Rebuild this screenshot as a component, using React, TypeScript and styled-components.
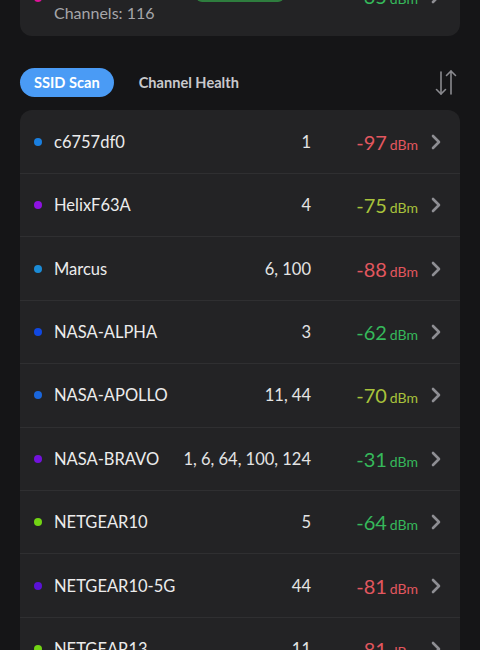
import * as React from "react"
import styled, { createGlobalStyle } from "styled-components"

const GlobalStyle = createGlobalStyle`
  html, body {
    margin: 0;
    background: #151517;
    font-family: Lato, "Noto Sans", sans-serif;
    color: #ececec;
  }
`

const Page = styled.div`
  padding: 0 20px 40px;
`

const Card = styled.div`
  background: #232325;
  border-radius: 12px;
`

const CurrentCard = styled(Card)`
  margin-top: -32px;
  padding: 12px 18px 12px 14px;
  display: flex;
  align-items: center;
`

const InfoColumn = styled.div`
  display: flex;
  flex-direction: column;
  flex: 1;
`

const CurrentName = styled.div`
  font-size: 16.5px;
  line-height: 22px;
`

const SubLine = styled.div`
  font-size: 16px;
  line-height: 22px;
  color: #a6a6aa;
`

const Badge = styled.div`
  width: 88px;
  height: 22px;
  border-radius: 6px;
  background: #2e7d3e;
  margin-right: 72px;
  margin-top: -23px;
`

const Tabs = styled.div`
  display: flex;
  align-items: center;
  gap: 11px;
  margin: 32px 0 13px;
`

const Tab = styled.button<{ $active?: boolean }>`
  font-family: inherit;
  font-size: 14.6px;
  font-weight: 700;
  height: 29px;
  padding: 0 14px;
  border: none;
  border-radius: 15px;
  background: ${(p) => (p.$active ? "#4a9bf5" : "transparent")};
  color: ${(p) => (p.$active ? "#ffffff" : "#c9c9cd")};
`

const SortButton = styled.div`
  margin-left: auto;
  margin-right: 3px;
  display: flex;
`

const Row = styled.div`
  display: grid;
  grid-template-columns: 8px 1fr auto 95px 12px;
  column-gap: 12px;
  align-items: center;
  height: 62.4px;
  padding: 0 18px 0 14px;
  border-top: 1px solid #2f2f31;

  &:first-child {
    height: 63px;
    border-top: none;
  }
`

const Dot = styled.span<{ $color: string }>`
  width: 8px;
  height: 8px;
  border-radius: 50%;
  background: ${(p) => p.$color};
`

const Name = styled.span`
  font-size: 16.5px;
  color: #ececec;
`

const Channels = styled.span`
  font-size: 16.5px;
  color: #e4e4e4;
  text-align: right;
`

const Signal = styled.span<{ $color: string }>`
  text-align: right;
  color: ${(p) => p.$color};
  font-size: 20px;
  white-space: nowrap;

  small {
    font-size: 14px;
    margin-left: 3px;
  }
`

const Chevron = () => (
  <svg width="12" height="16" viewBox="0 0 12 16">
    <polyline
      points="3,2 9,8 3,14"
      fill="none"
      stroke="#8e8e93"
      strokeWidth="2.6"
      strokeLinecap="round"
      strokeLinejoin="round"
    />
  </svg>
)

const SortIcon = () => (
  <svg width="22" height="28" viewBox="0 0 22 28" fill="none" stroke="#8a8a8f" strokeWidth="1.6" strokeLinecap="round" strokeLinejoin="round">
    <line x1="6" y1="3" x2="6" y2="25" />
    <polyline points="1.5,20.5 6,25 10.5,20.5" />
    <line x1="16" y1="2" x2="16" y2="25" />
    <polyline points="11.5,6.5 16,2 20.5,6.5" />
  </svg>
)

const RED = "#e2575f"
const YELLOW = "#a8c23b"
const GREEN = "#36b85b"

const networks = [
  { name: "c6757df0", dot: "#1a7fe0", ch: "1", dbm: -97, color: RED },
  { name: "HelixF63A", dot: "#8e12e2", ch: "4", dbm: -75, color: YELLOW },
  { name: "Marcus", dot: "#1b8bd6", ch: "6, 100", dbm: -88, color: RED },
  { name: "NASA-ALPHA", dot: "#1048e2", ch: "3", dbm: -62, color: GREEN },
  { name: "NASA-APOLLO", dot: "#1a66dc", ch: "11, 44", dbm: -70, color: YELLOW },
  { name: "NASA-BRAVO", dot: "#7212dc", ch: "1, 6, 64, 100, 124", dbm: -31, color: GREEN },
  { name: "NETGEAR10", dot: "#72d414", ch: "5", dbm: -64, color: GREEN },
  { name: "NETGEAR10-5G", dot: "#5a12d6", ch: "44", dbm: -81, color: RED },
  { name: "NETGEAR13", dot: "#72d414", ch: "11", dbm: -81, color: RED },
  { name: "NETGEAR13-5G", dot: "#5a12d6", ch: "149", dbm: -84, color: RED },
]

const App = () => (
  <>
    <GlobalStyle />
    <Page>
      <CurrentCard>
        <Dot $color="#e0129a" style={{ marginTop: "-8px", marginRight: "12px" }} />
        <InfoColumn>
          <CurrentName>NASA-BRAVO</CurrentName>
          <SubLine>Channels: 116</SubLine>
        </InfoColumn>
        <Badge />
        <Signal $color={GREEN} style={{ marginTop: "-12px", marginRight: "12px" }}>
          -35<small>dBm</small>
        </Signal>
        <span style={{ marginTop: "-12px", display: "flex" }}>
          <Chevron />
        </span>
      </CurrentCard>

      <Tabs>
        <Tab $active>SSID Scan</Tab>
        <Tab>Channel Health</Tab>
        <SortButton>
          <SortIcon />
        </SortButton>
      </Tabs>

      <Card>
        {networks.map((n) => (
          <Row key={n.name}>
            <Dot $color={n.dot} />
            <Name>{n.name}</Name>
            <Channels>{n.ch}</Channels>
            <Signal $color={n.color}>
              {n.dbm}
              <small>dBm</small>
            </Signal>
            <Chevron />
          </Row>
        ))}
      </Card>
    </Page>
  </>
)

export default App
